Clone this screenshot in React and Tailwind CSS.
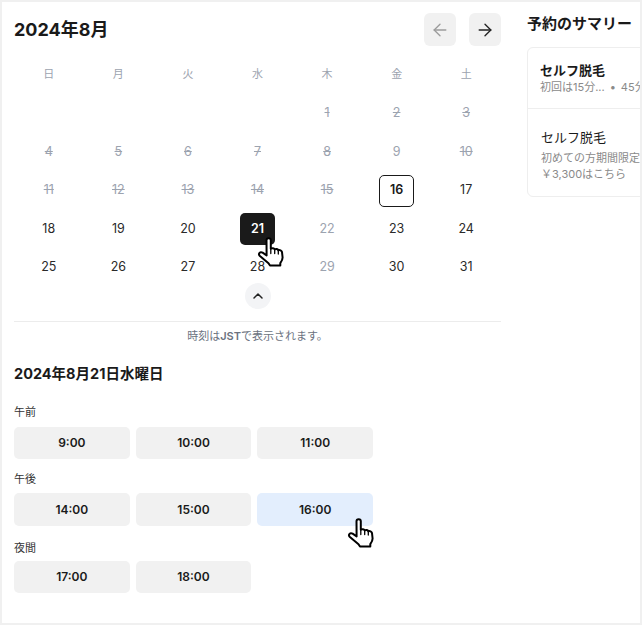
import React from "react";
import { ArrowLeft, ArrowRight, ChevronUp } from "lucide-react";

const font = { fontFamily: '"Inter","Noto Sans CJK JP",sans-serif' };

function Hand({ className }) {
  return (
    <svg className={className} width="27" height="30" viewBox="0 0 27 30" fill="#fff" stroke="#000" strokeWidth="2" strokeLinejoin="round" strokeLinecap="round">
      <path d="M9.500 3.200c0-2.600 4.300-2.600 4.300 0v8.600c1.300-.9 3.200-.7 3.900.6 1.200-.7 3-.4 3.600.9 1.500-.6 3.300.2 3.700 1.800l.6 5.400c0 2.500-1.300 4.200-2.300 5.600v2.400H13l-1.500-2.300-8.600-7.200c-2.200-2.300.3-4.800 2.700-3.300l4 2.700z" />
      <path d="M13.800 12v4.500M17.700 12.500v4M21.300 13.400v3.600" strokeWidth="1.300" />
    </svg>
  );
}

const weekdays = ["日", "月", "火", "水", "木", "金", "土"];
const cells = [null, null, null, null, 1, 2, 3, 4, 5, 6, 7, 8, 9, 10, 11, 12, 13, 14, 15, 16, 17, 18, 19, 20, 21, 22, 23, 24, 25, 26, 27, 28, 29, 30, 31];
const struck = new Set([1, 2, 3, 4, 5, 6, 7, 8, 10, 11, 12, 13, 14, 15]);
const muted = new Set([9, 22, 29]);

function Day({ d }) {
  if (d === null) return <div className="h-[38.4px]" />;
  let cls = "text-[#2a2a2a] font-normal";
  const box = "w-[35px] h-[32px] rounded-[5px] flex items-center justify-center";
  if (struck.has(d)) cls = "text-[#9ca3af] line-through";
  if (muted.has(d)) cls = "text-[#9ca3af]";
  if (d === 16) cls = "text-[#1a1a1a] font-semibold border border-[#1a1a1a]";
  if (d === 21) cls = "text-white font-semibold bg-[#1a1a1a]";
  return (
    <div className="h-[38.4px] flex items-center justify-center text-[12.5px]">
      <div className={box + " " + cls}>{d}</div>
    </div>
  );
}

function Slot({ t, active }) {
  return (
    <button className={"h-[32.5px] rounded-[5px] text-[12px] font-semibold text-[#1a1a1a] " + (active ? "bg-[#e3eefd]" : "bg-[#f1f1f1]")}>
      {t}
    </button>
  );
}

function Group({ label, times, active, className, labelClass }) {
  return (
    <div className={"flex flex-col " + className}>
      <div className={"text-[11px] leading-[15px] text-[#333] " + labelClass}>{label}</div>
      <div className="grid grid-cols-3 gap-x-[6px] w-[359px]">
        {times.map((t) => <Slot key={t} t={t} active={t === active} />)}
      </div>
    </div>
  );
}

export default function App() {
  return (
    <div style={font} className="relative w-[642px] h-[625px] bg-white border-2 border-[#f0f0f0] flex overflow-hidden text-[#1a1a1a]">
      <div className="w-[499px] shrink-0 pl-3 pt-[11px] flex flex-col">
        <div className="flex items-center justify-between h-[33px]">
          <h1 className="text-[18px] font-bold leading-none">2024年8月</h1>
          <div className="flex gap-[13px]">
            <div className="w-[32px] h-[33px] rounded-[6px] bg-[#f1f1f1] flex items-center justify-center">
              <ArrowLeft size={20} strokeWidth={1.6} className="text-[#9c9c9c]" />
            </div>
            <div className="w-[32px] h-[33px] rounded-[6px] bg-[#f1f1f1] flex items-center justify-center">
              <ArrowRight size={20} strokeWidth={1.6} className="text-[#222]" />
            </div>
          </div>
        </div>
        <div className="grid grid-cols-7 mt-[8.6px] w-[487px]">
          {weekdays.map((w) => (
            <div key={w} className="h-[40px] flex items-center justify-center text-[11px] text-[#9ca3af]">{w}</div>
          ))}
          {cells.map((d, i) => <Day key={i} d={d} />)}
        </div>
        <div className="relative w-[487px] flex justify-center mt-[-3.6px]">
          <div className="w-[26px] h-[26px] rounded-full bg-[#f3f4f6] flex items-center justify-center">
            <ChevronUp size={16} strokeWidth={2.2} className="text-[#222]" />
          </div>
        </div>
        <div className="w-[487px] border-t border-[#ececec] mt-[12px] pt-[7px] text-center text-[11px] leading-[15px] text-[#6b7280]">
          時刻は<span className="font-semibold">JST</span>で表示されます。
        </div>
        <h2 className="text-[14.5px] font-bold leading-[20px] mt-[20px]">2024年8月21日水曜日</h2>
        <div className="flex flex-col mt-[21px]">
          <Group labelClass="h-[22px]" label="午前" times={["9:00", "10:00", "11:00"]} />
          <Group labelClass="h-[21px]" className="mt-[13px]" label="午後" times={["14:00", "15:00", "16:00"]} active="16:00" />
          <Group labelClass="h-[20px]" className="mt-[15px]" label="夜間" times={["17:00", "18:00"]} />
        </div>
      </div>
      <div className="flex-1 pl-[26px] pt-[13px] min-w-0">
        <h2 className="text-[15px] font-bold leading-[18px] whitespace-nowrap">予約のサマリー</h2>
        <div className="mt-[14px] w-[300px] h-[150px] border border-[#eeeeee] rounded-[6px]">
          <div className="h-[61px] border-b border-[#eeeeee] pl-[12px] pt-[13px]">
            <div className="text-[13px] font-semibold leading-[18px]">セルフ脱毛</div>
            <div className="text-[11px] leading-[16px] text-[#8a8a8a] whitespace-nowrap">初回は15分...<span className="mx-[5px]">•</span>45分</div>
          </div>
          <div className="pl-[13px] pt-[19px]">
            <div className="text-[13px] leading-[18px]">セルフ脱毛</div>
            <div className="text-[11px] leading-[16px] text-[#8a8a8a] mt-[4px] whitespace-nowrap">初めての方期間限定</div>
            <div className="text-[11px] leading-[16px] text-[#8a8a8a] whitespace-nowrap">￥3,300はこちら</div>
          </div>
        </div>
      </div>
      <Hand className="absolute left-[255px] top-[235px]" />
      <Hand className="absolute left-[345px] top-[516px]" />
    </div>
  );
}
